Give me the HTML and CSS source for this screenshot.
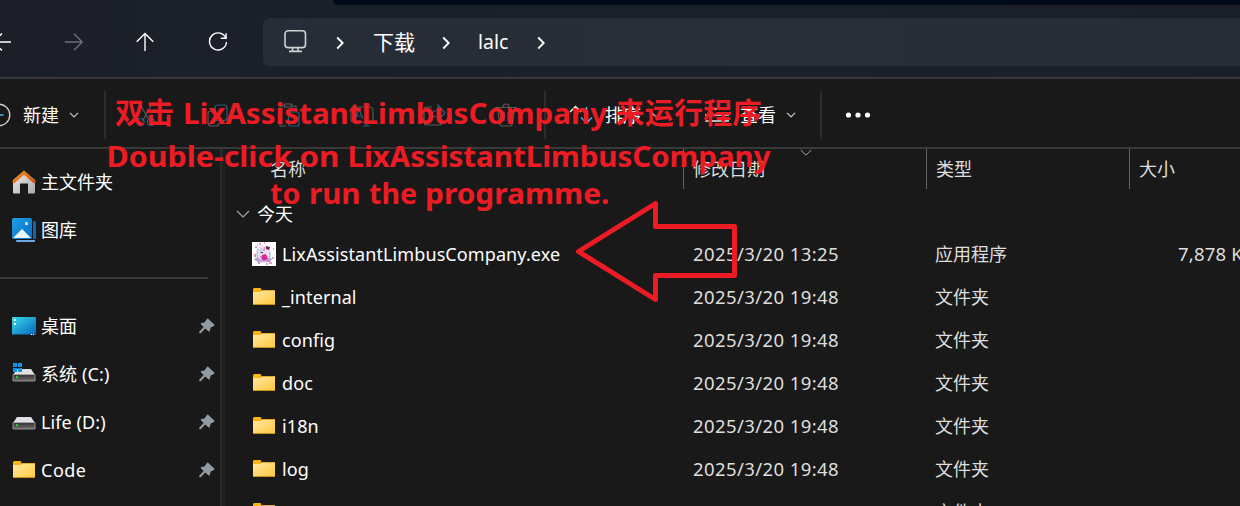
FILE: index.html
```html
<!DOCTYPE html>
<html lang="zh-CN">
<head>
<meta charset="utf-8">
<title>lalc</title>
<link rel="stylesheet" href="styles.css">
</head>
<body>
<svg class="defs" width="0" height="0">
  <defs>
    <linearGradient id="gFolder" x1="0" y1="0" x2="1" y2="1"><stop offset="0" stop-color="#ffe9a6"/><stop offset="1" stop-color="#ffc83d"/></linearGradient>
    <linearGradient id="gDesk" x1="0" y1="0" x2="1" y2="1"><stop offset="0" stop-color="#34dbe6"/><stop offset="1" stop-color="#0a62bd"/></linearGradient>
    <linearGradient id="gPic" x1="0" y1="0" x2="1" y2="1"><stop offset="0" stop-color="#1da0e6"/><stop offset="1" stop-color="#0a6cc4"/></linearGradient>
    <linearGradient id="gRoof" x1="0" y1="0" x2="1" y2="1"><stop offset="0" stop-color="#fb9a12"/><stop offset="1" stop-color="#d1480b"/></linearGradient>
    <linearGradient id="gWall" x1="0" y1="0" x2="1" y2="1"><stop offset="0" stop-color="#efefef"/><stop offset="1" stop-color="#a9a9a9"/></linearGradient>
    <linearGradient id="gDrive" x1="0" y1="0" x2="0" y2="1"><stop offset="0" stop-color="#333"/><stop offset="1" stop-color="#6c6c6c"/></linearGradient>
  </defs>
  <symbol id="folder" viewBox="0 0 24 20"><path d="M1 18V2.500Q1 1 2.300 1H8q1 0 1.300 1V6H1z" fill="#fbb315"/><path d="M1 5h7.500L10 3H23V17.500H1z" fill="url(#gFolder)"/><path d="M10 3h13v.8H9.500zM1 16.900h22v.9H1z" fill="#dc9c18"/></symbol>
  <symbol id="pin" viewBox="0 0 16 16"><path d="M9.200.7 15.300 6.400Q15.900 7.200 15 7.900L11.800 9.500 10.700 13Q10.300 14.200 9.300 13.300L6.300 10.500 1.800 15.200H.2V13.800L4.700 9.100 1.800 6.300Q1.100 5.200 2.500 4.900L5.800 4.300 7.800 1Q8.400.2 9.200.7z" fill="#929ba1"/></symbol>
  <symbol id="drive" viewBox="0 0 24 14"><path d="M5 1h14l4 6H1z" fill="#dfe0e3"/><path d="M1 6.500h22V13H1z" fill="url(#gDrive)" stroke="#a7a7a7" stroke-width=".8"/><path d="M4 8.200h2v2H4z" fill="#22e62a"/></symbol>
  <symbol id="down" viewBox="0 0 10 6"><path d="M1 .9 5 4.900 9 .9" fill="none" stroke="#c6c6c6" stroke-width="1.300"/></symbol>
  <symbol id="right" viewBox="0 0 8 14"><path d="M1.200 1.500 6.700 7 1.200 12.500" fill="none" stroke="#fff" stroke-width="1.800"/></symbol>
</svg>

<div class="window">
  <div class="tabstrip"></div>
  <nav class="navbar">
    <svg class="nav back" viewBox="0 0 20 20"><path d="M19 10H1.500M10 1.500 1.500 10l8.500 8.500"/></svg>
    <svg class="nav forward" viewBox="0 0 20 20"><path d="M.8 10H18M10 1.800 18.200 10 10 18.200"/></svg>
    <svg class="nav up" viewBox="0 0 20 20"><path d="M10 19V1.500M1.700 9.800 10 1.500l8.300 8.300"/></svg>
    <svg class="nav reload" viewBox="0 0 20 20"><path d="M18 6.500A8.500 8.500 0 1 0 18.500 10M18.100 1.300V6.300H12.800"/></svg>
    <div class="address">
      <svg class="monitor" viewBox="0 0 24 24"><rect x="2" y="1.800" width="20.500" height="16.800" rx="3.200"/><path d="M9.500 19v3M15 19v3M6 22.400h13"/></svg>
      <svg class="crumb c1"><use href="#right"/></svg>
      <span class="path p1">下载</span>
      <svg class="crumb c2"><use href="#right"/></svg>
      <span class="path p2">lalc</span>
      <svg class="crumb c3"><use href="#right"/></svg>
    </div>
  </nav>

  <div class="toolbar">
    <div class="group new">
      <svg class="plus" viewBox="0 0 24 24"><circle cx="12" cy="12" r="10.800" stroke="#d8d8d8"/><path d="M7 12h9.500M12 7v10" stroke="#45b3f5"/></svg>
      <span class="label">新建</span>
      <svg class="chev"><use href="#down"/></svg>
    </div>
    <div class="group edit">
      <svg class="tool" viewBox="0 0 24 24"><path d="M6 1l9.500 17M18 1 8.500 18"/><g class="blue"><circle cx="6.500" cy="19" r="3.500"/><circle cx="17" cy="19" r="3.500"/></g></svg>
      <svg class="tool" viewBox="0 0 24 24"><path d="M7 8H5q-3 0-3 3v9q0 3 3 3h5q3 0 3-3"/><rect class="blue" x="9" y="2" width="12" height="15.500" rx="3"/></svg>
      <svg class="tool" viewBox="0 0 24 24"><path d="M7 3H2v20h6M14 3h4v5M6.500 1h7v3h-7z"/><rect class="blue" x="10.500" y="9" width="10.500" height="14" rx="2"/></svg>
      <svg class="tool" viewBox="0 0 24 24"><path d="M14 4H4Q1 4 1 7v9q0 3 3 3h10M19 4q4 0 4 4v7q0 4-4 4"/><path class="blue" d="M5 16 9 6l4 10M6.500 13h5M13 2h7M16.500 2v21M13 23h7"/></svg>
      <svg class="tool" viewBox="0 0 24 24"><path d="M10 4H5Q2 4 2 7v12q0 3 3 3h12q3 0 3-3v-3"/><path class="blue" d="M16 2l7 8-7 7v-4q-6 0-9 4 1-9 9-10z"/></svg>
      <svg class="tool" viewBox="0 0 24 24"><path d="M1 4.500h22M9 4Q9 1 12 1t3 3M3.500 5l2 15q.5 3 3 3h7q2.500 0 3-3l2-15M10 9v9M14 9v9"/></svg>
    </div>
    <div class="group arrange">
      <svg class="sort" viewBox="0 0 24 20"><path d="M6.500 18V2M1 7l5.500-5.500L12 7" stroke="#eee"/><path d="M17.500 2v16M12 12.500l5.500 5.500 5.500-5.500" stroke="#45b3f5"/></svg>
      <span class="label">排序</span>
      <svg class="chev"><use href="#down"/></svg>
      <svg class="lines" viewBox="0 0 24 20"><path d="M0 4h24M0 10h24M0 16h24"/></svg>
      <span class="label">查看</span>
      <svg class="chev"><use href="#down"/></svg>
    </div>
    <svg class="more" viewBox="0 0 26 6"><circle cx="3.500" cy="3" r="2.600"/><circle cx="13" cy="3" r="2.600"/><circle cx="22.500" cy="3" r="2.600"/></svg>
  </div>

  <div class="content">
    <aside class="sidebar">
      <div class="item"><svg class="ico" viewBox="0 0 24 24"><path d="M1 10 12 1 23 10V22.500Q23 23.500 22 23.500H16V13.500H8V23.500H2Q1 23.500 1 22.500z" fill="url(#gWall)"/><path d="M12 .5 24 11.500 22 13.500 12 4.800 2 13.500 0 11.500z" fill="url(#gRoof)"/></svg><span>主文件夹</span></div>
      <div class="item"><svg class="ico" viewBox="0 0 24 24"><path d="M21 3h1.500q1.500 0 1.500 1.500V20q0 1-1 1h-2z" fill="#0a68bb"/><path d="M4 22h19v1q0 1-1 1H5q-1 0-1-2z" fill="#6fa8e2"/><rect width="20" height="21" rx="1.500" fill="url(#gPic)"/><path d="M1 20 10 11l9 9z" fill="#eaf6ff"/><circle cx="14.500" cy="5.500" r="1.500" fill="#fff"/></svg><span>图库</span></div>
      <div class="rule"></div>
      <div class="item"><svg class="ico" viewBox="0 0 24 24"><rect y="3" width="24" height="18" rx="1" fill="url(#gDesk)"/><path d="M0 20h24v.5q0 .5-1 .5H1q-1 0-1-.5z" fill="#134a78"/><path d="M2 5h2v2H2zM2 9h2v2H2zM19 20h1v1h-1zM21 20h1v1h-1z" fill="#fff"/></svg><span>桌面</span><svg class="pin"><use href="#pin"/></svg></div>
      <div class="item"><svg class="ico" viewBox="0 0 24 24"><use href="#drive" y="6" width="24" height="14"/><path d="M1 1h4v4H1zM6 1h4v4H6zM1 6h4v4H1zM6 6h4v4H6z" fill="#1493e3"/></svg><span class="lat">系统 (C:)</span><svg class="pin"><use href="#pin"/></svg></div>
      <div class="item"><svg class="ico" viewBox="0 0 24 24"><use href="#drive" y="6" width="24" height="14"/></svg><span class="lat">Life (D:)</span><svg class="pin"><use href="#pin"/></svg></div>
      <div class="item"><svg class="ico" viewBox="0 0 24 24"><use href="#folder" y="2" width="24" height="20"/></svg><span class="lat code">Code</span><svg class="pin"><use href="#pin"/></svg></div>
    </aside>
    <main class="files">
      <div class="head">
        <span class="hname">名称</span><span class="hcell">修改日期<svg class="sorted" viewBox="0 0 12 7"><path d="M.8 1 6 6.200 11.200 1"/></svg></span><span class="hcell">类型</span><span class="hcell">大小</span>
      </div>
      <div class="today"><svg viewBox="0 0 14 8"><path d="M1 1 7 7 13 1"/></svg><span>今天</span></div>
      <div class="row"><svg class="ico" viewBox="0 0 24 24"><path d="M0 0h24v24H0z" fill="#fff"/><path d="M5 6q4-5 10-2 5 3 4 10l-3 6H6Q2 13 5 6z" fill="#e9e2f1"/><path d="M2 17q3-3 6 0 4 5 8 0 3-2 4 0-2 4-7 3-8 1-11-3z" fill="#b9a0d8"/><path d="M10 13l4-1 2 5-4 2-3-2z" fill="#d42a91"/><path d="M14 4l4 1-1 3-3-1zM9 10h2v1H9z" fill="#73205f"/><path d="M3 5h2M7 2h2M12 1h1M5 3h1M21 7h1M20 16h2M6 21h2M14 22h2M17 21h3M3 12v3M11 8h2M12 6h1" stroke="#c23b90" stroke-width="1.200"/><path d="M6 7q-2 5 0 9M17 10q2 3 0 7M10 6q-2 3-2 6" fill="none" stroke="#9bc1d9"/><path d="M8 14l2 3M15 18l3 2" stroke="#f05da8"/></svg><span class="name">LixAssistantLimbusCompany.exe</span><span class="date">2025/3/20 13:25</span><span class="type">应用程序</span><span class="size">7,878 KB</span></div>
      <div class="row"><svg class="ico" viewBox="0 0 24 24"><use href="#folder" y="2" width="24" height="20"/></svg><span class="name">_internal</span><span class="date">2025/3/20 19:48</span><span class="type">文件夹</span></div>
      <div class="row"><svg class="ico" viewBox="0 0 24 24"><use href="#folder" y="2" width="24" height="20"/></svg><span class="name">config</span><span class="date">2025/3/20 19:48</span><span class="type">文件夹</span></div>
      <div class="row"><svg class="ico" viewBox="0 0 24 24"><use href="#folder" y="2" width="24" height="20"/></svg><span class="name">doc</span><span class="date">2025/3/20 19:48</span><span class="type">文件夹</span></div>
      <div class="row"><svg class="ico" viewBox="0 0 24 24"><use href="#folder" y="2" width="24" height="20"/></svg><span class="name">i18n</span><span class="date">2025/3/20 19:48</span><span class="type">文件夹</span></div>
      <div class="row"><svg class="ico" viewBox="0 0 24 24"><use href="#folder" y="2" width="24" height="20"/></svg><span class="name">log</span><span class="date">2025/3/20 19:48</span><span class="type">文件夹</span></div>
      <div class="row"><svg class="ico" viewBox="0 0 24 24"><use href="#folder" y="2" width="24" height="20"/></svg><span class="name"></span><span class="date">2025/3/20 19:48</span><span class="type">文件夹</span></div>
    </main>
  </div>

  <svg class="notes" viewBox="0 0 1240 506">
    <text x="115" y="124" textLength="59">双击</text>
    <text x="183" y="124" textLength="424" lengthAdjust="spacingAndGlyphs">LixAssistantLimbusCompany</text>
    <text x="615.500" y="124" textLength="146">来运行程序</text>
    <text x="106.500" y="167" textLength="185.500" lengthAdjust="spacingAndGlyphs">Double-click</text>
    <text x="299.500" y="167" textLength="40" lengthAdjust="spacingAndGlyphs">on</text>
    <text x="347.500" y="167" textLength="423" lengthAdjust="spacingAndGlyphs">LixAssistantLimbusCompany</text>
    <text x="270" y="204" textLength="30.500" lengthAdjust="spacingAndGlyphs">to</text>
    <text x="309" y="204" textLength="51.500" lengthAdjust="spacingAndGlyphs">run</text>
    <text x="369" y="204" textLength="48" lengthAdjust="spacingAndGlyphs">the</text>
    <text x="425" y="204" textLength="184.500" lengthAdjust="spacingAndGlyphs">programme.</text>
    <path d="M578.500 251.500 655.500 203.500V226.500H734.500V275.500H655.500V299.500z"/>
  </svg>
</div>
</body>
</html>
```

FILE: styles.css
```css
* { box-sizing: border-box; }
body {
  margin: 0;
  background: #191919;
  color: #fff;
  font: 18px/24px "Noto Sans", "Noto Sans CJK SC", sans-serif;
}
svg { display: block; flex: none; }
span { flex: none; white-space: nowrap; }
.defs { position: absolute; }
.window {
  position: relative;
  display: flex;
  flex-direction: column;
  width: 1240px;
  height: 506px;
  overflow: hidden;
}

/* navigation */
.tabstrip {
  position: absolute;
  top: 0;
  left: 333px;
  right: 0;
  height: 5px;
  background: #000a1b;
  border-bottom-left-radius: 5px;
}
.navbar {
  display: flex;
  flex: none;
  height: 79px;
  padding-top: 7px;
  align-items: center;
  background: linear-gradient(90deg, #1c1f28 0, #1a202a 25%, #1a212a 60%, #1b1f2b 100%);
  border-bottom: 2px solid #393939;
}
.nav {
  width: 20px;
  height: 20px;
  fill: none;
  stroke: #fff;
  stroke-width: 1.4;
}
.back { margin-left: -8px; }
.forward { margin-left: 52px; stroke: #6c6f75; }
.up { margin-left: 51px; }
.reload { margin-left: 53px; }
.address {
  display: flex;
  align-items: center;
  flex: 1;
  height: 48px;
  margin-left: 35px;
  padding-left: 20px;
  background: linear-gradient(90deg, #272d36 0, #272e36 60%, #272b37 100%);
  border-radius: 6px 0 0 6px;
}
.monitor {
  width: 24px;
  height: 24px;
  margin-top: -2px;
  fill: none;
  stroke: #cfd1d3;
  stroke-width: 1.6;
}
.crumb { width: 8px; height: 14px; margin-top: 2px; }
.c1 { margin-left: 29px; }
.path { font-size: 21px; }
.p1 { width: 42px; margin-left: 29px; }
.c2 { margin-left: 27px; }
.p2 { width: 32px; margin-left: 28px; font-size: 19.5px; }
.c3 { margin-left: 27px; }

/* commands */
.toolbar {
  display: flex;
  flex: none;
  align-items: center;
  height: 70px;
  padding-top: 4px;
  border-bottom: 2px solid #393939;
}
.group {
  display: flex;
  flex: none;
  align-items: center;
  height: 48px;
  border-right: 2px solid #2c2c2c;
}
.new { width: 106px; }
.edit { width: 440px; padding-left: 28px; gap: 48px; }
.arrange { width: 276px; padding-left: 23px; }
.plus {
  width: 24px;
  height: 24px;
  margin-left: -13px;
  fill: none;
  stroke-width: 1.3;
}
.label { width: 36px; }
.new .label { margin-left: 12px; }
.chev { width: 10px; height: 6px; margin-left: 10px; }
.tool {
  width: 24px;
  height: 24px;
  fill: none;
  stroke: #5b5b5b;
  stroke-width: 1.2;
}
.blue { stroke: #2b5d7a; }
.sort { width: 24px; height: 20px; margin-right: 12px; fill: none; stroke-width: 1.5; }
.lines { width: 24px; height: 20px; margin: 0 11px 0 44px; stroke: #eee; stroke-width: 1.5; }
.more { width: 26px; height: 6px; margin-left: 23px; fill: #fff; }

/* folders */
.content { display: flex; flex: 1; min-height: 0; }
.sidebar {
  flex: none;
  width: 225px;
  padding-top: 9px;
  border-right: 3px solid #202020;
  box-shadow: inset -2px 0 #2b2b2b;
}
.item { display: flex; align-items: center; height: 48px; padding-left: 12px; }
.ico { width: 24px; height: 24px; margin-right: 5px; }
.lat { letter-spacing: .1px; }
.code { letter-spacing: .5px; }
.pin { width: 16px; height: 16px; margin: 0 7px 0 auto; }
.rule { width: 208px; height: 2px; margin: 23px 0; background: #383838; }

/* file list */
.files { flex: 1; min-width: 0; }
.head { display: flex; height: 40px; line-height: 41px; color: #dedede; }
.hname { width: 458px; padding-left: 45px; }
.hcell {
  position: relative;
  width: 243px;
  padding-left: 9px;
  border-left: 1px solid #636363;
}
.hcell:nth-child(3) { width: 203px; }
.hcell:nth-child(4) { width: 111px; }
.sorted {
  position: absolute;
  top: 0;
  left: 116px;
  width: 12px;
  height: 7px;
  fill: none;
  stroke: #a5a5a5;
}
.today { display: flex; align-items: center; height: 43px; padding: 7px 0 0 11px; }
.today svg { width: 14px; height: 8px; margin-right: 7px; fill: none; stroke: #a5a5a5; stroke-width: 1.2; }
.row { display: flex; align-items: center; height: 43px; padding-left: 27px; }
.row .ico { margin-right: 6px; }
.name { width: 411px; letter-spacing: .1px; }
.date { width: 242px; color: #dedede; font-size: 18.5px; letter-spacing: .41px; }
.type { width: 243px; color: #dedede; }
.size { color: #dedede; font-size: 18.5px; letter-spacing: .2px; }

/* annotation */
.notes { position: absolute; inset: 0; width: 1240px; height: 506px; }
.notes text { font-size: 29px; font-weight: 700; fill: #ed1c24; }
.notes path { fill: none; stroke: #ed1c24; stroke-width: 5; stroke-linejoin: round; }
```
